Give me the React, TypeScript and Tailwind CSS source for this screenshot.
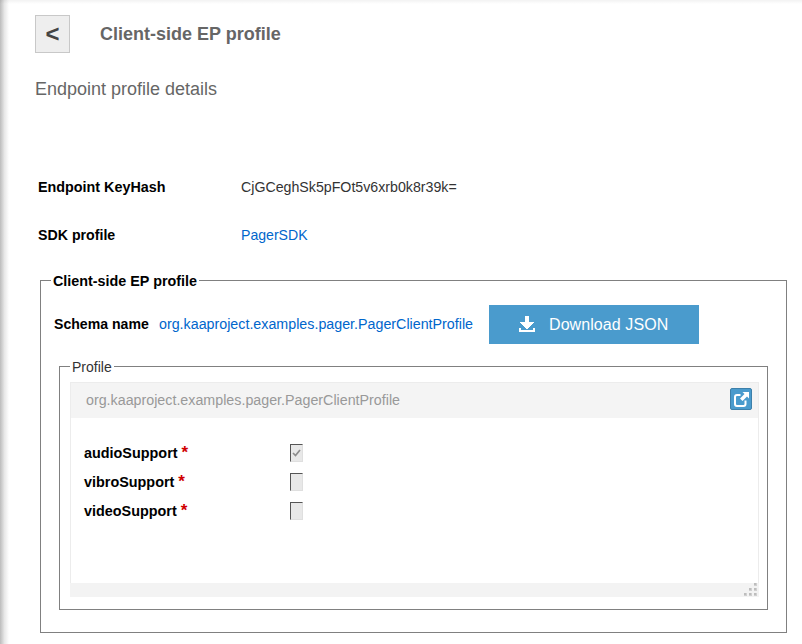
import React from 'react';

const DownloadIcon = () => (
  <svg className="mb-[1px]" width="16" height="16" viewBox="0 0 16 16" fill="#fff" shapeRendering="crispEdges">
    <path d="M6 0h4v6h5L8.500 13h-1L1 6h5z" />
    <path d="M0 11.500h2V14h12v-2.500h2V16H0z" />
  </svg>
);

const OpenIcon = () => (
  <svg width="18" height="18" viewBox="0 0 18 18" fill="none">
    <path d="M8.500 5H5Q3 5 3 7v7q0 2 2 2h6.500q2 0 2-2V10.500" stroke="#fff" strokeWidth="2" />
    <path d="M10.500 2H17v6.500l-2-2-4.500 4.500-2.500-2.500L12.500 4z" fill="#fff" />
  </svg>
);

const ResizeGrip = () => (
  <svg width="14" height="14" viewBox="0 0 14 14">
    {[[10, 0], [5, 5], [10, 5], [0, 10], [5, 10], [10, 10]].map(([x, y]) => (
      <g key={`${x}-${y}`}>
        <rect x={x} y={y} width="3" height="3" fill="#d0d0d0" />
        <rect x={x} y={y} width="2" height="2" fill="#bdbdbd" />
      </g>
    ))}
  </svg>
);

function Row({ name, checked = false }: { name: string; checked?: boolean }) {
  return (
    <div className="flex h-[29px] items-center">
      <div className="flex w-[206px] gap-1 text-[14.400px] font-bold text-black">
        <span>{name}</span>
        <span className="text-[17px] text-[#d00000]">*</span>
      </div>
      <span className="flex h-[18px] w-[13px] items-center justify-center border border-t-[#555] border-r-[#dfdfdf] border-b-[#dfdfdf] border-l-[#555] bg-[#e8e8e8]">
        {checked && (
          <svg width="9" height="8" viewBox="0 0 9 8" fill="none">
            <path d="M1 4l2.500 2.500L8 1" stroke="#8c8c8c" strokeWidth="1.700" />
          </svg>
        )}
      </span>
    </div>
  );
}

export default function App() {
  return (
    <div className="relative h-[644px] w-[802px] overflow-hidden bg-white font-['Liberation_Sans',Arial,sans-serif] text-[14.270px] leading-4 text-[#333]">
      <div className="absolute inset-y-0 left-0 w-[9px] bg-linear-to-r from-[#bcbcbc] via-[#e8e8e8] to-white" />
      <div className="absolute inset-x-0 top-0 h-[4px] bg-linear-to-b from-black/5 to-transparent" />

      <header className="flex h-[53px] items-end pl-[35px]">
        <button className="flex h-[38px] w-[35px] items-center justify-center border border-[#c8c8c8] bg-[#eee] text-[24px] font-bold text-[#444]">&lt;</button>
        <h1 className="ml-[30px] h-[38px] text-[18px] leading-[38px] font-bold text-[#666]">Client-side EP profile</h1>
      </header>
      <h2 className="mt-[26px] pl-[35px] text-[18px] leading-5 text-[#666]">Endpoint profile details</h2>

      <dl className="mt-[64px] grid grid-cols-[203px_1fr] pl-[38px] leading-[48px]">
        <dt className="text-[14.350px] font-bold text-black">Endpoint KeyHash</dt>
        <dd className="text-[14.200px]">CjGCeghSk5pFOt5v6xrb0k8r39k=</dd>
        <dt className="text-[14.200px] font-bold text-black">SDK profile</dt>
        <dd className="text-[14.100px] text-[#0066cc]">PagerSDK</dd>
      </dl>

      <fieldset className="mt-[14px] ml-[40px] h-[360px] w-[747px] border border-[#808080]">
        <legend className="ml-[10px] h-[15px] px-[2px] text-[14.350px] font-bold text-black">Client-side EP profile</legend>
        <div className="mt-[17px] flex h-[39px] items-center pl-[13px]">
          <span className="mb-[2px] w-[105px] text-[14.100px] font-bold text-black">Schema name</span>
          <span className="mb-[2px] w-[330px] text-[#0066cc]">org.kaaproject.examples.pager.PagerClientProfile</span>
          <button className="flex h-[39px] w-[210px] items-center bg-[#4a9bcd] pl-[30px] text-[16px] tracking-[0.08px] text-white">
            <DownloadIcon />
            <span className="ml-[14px]">Download JSON</span>
          </button>
        </div>

        <fieldset className="mt-[15px] ml-[18px] h-[251px] w-[709px] border border-[#808080]">
          <legend className="ml-[10px] h-[15px] px-[2px] text-[14px]">Profile</legend>
          <section className="mt-[8px] ml-[10px] flex h-[215px] w-[689px] flex-col border-x border-t border-[#ececec]">
            <div className="flex h-[35px] items-start justify-between bg-[#f4f4f4] pt-[5px] pr-[6px] pl-[15px] text-[#999]">
              <span className="mt-[4px]">org.kaaproject.examples.pager.PagerClientProfile</span>
              <button className="flex size-[22px] items-center justify-center rounded-[2px] border border-[#3d80aa] bg-[#4a9bcd]">
                <OpenIcon />
              </button>
            </div>
            <div className="flex-1 pt-[20px] pl-[13px]">
              <Row name="audioSupport" checked />
              <Row name="vibroSupport" />
              <Row name="videoSupport" />
            </div>
            <div className="-mx-px flex h-[14px] justify-end bg-[#f3f3f3] pr-px">
              <ResizeGrip />
            </div>
          </section>
        </fieldset>
      </fieldset>
    </div>
  );
}
